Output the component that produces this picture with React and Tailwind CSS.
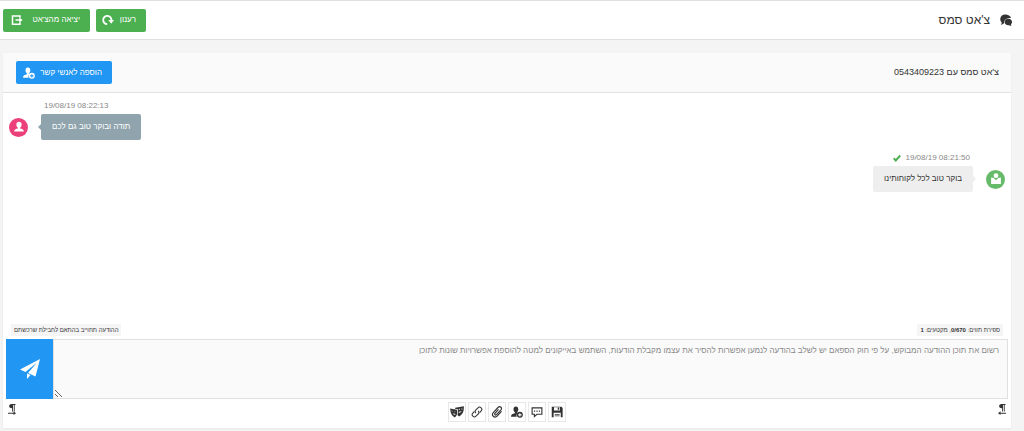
import React from 'react';

const ChatsIcon = () => (
    <svg viewBox="0 0 24 24" className="size-3 fill-[#333]" aria-hidden="true">
        <path d="M10.500 1C4.500 1 .5 5 .5 10c0 3 1 5 3 7 0 2-1 3-2 4 3 0 5.500-1 6.500-3 0-7 5-10 14-10C21 4 16 1 10.500 1z" />
        <path d="M17 9.500c-4.500 0-8 3-8 6.500s3.500 6.500 8 6.500c1 0 3 1 6 1-1-1-1-2-1-3 1-1 2-2.500 2-4.500 0-3.500-3-6.500-7-6.500z" />
    </svg>
);

const ExitIcon = () => (
    <svg viewBox="0 0 16 16" className="size-3 fill-white" aria-hidden="true">
        <path d="M1 1.500h12v3.500h-2V3.500H3v9h8V11h2v3.500H1z" />
        <path d="M6 7h5V4.500L15.500 8 11 11.500V9H6z" />
    </svg>
);

const ReloadIcon = () => (
    <svg viewBox="0 0 16 16" className="size-3 fill-none stroke-white" aria-hidden="true">
        <path d="M7 13.500A5.500 5.500 0 1 1 12.500 9" strokeWidth="2.400" />
        <path d="M8.500 8H16l-3.700 5z" fill="#fff" stroke="none" />
    </svg>
);

const UserPlusIcon = () => (
    <svg viewBox="0 0 16 16" className="size-3" fill="currentColor" aria-hidden="true">
        <path d="M6.500.5C4.300.5 3.300 2 3.300 4.300c0 2 .9 3.500 1.900 4v1.300C2.200 10.100 0 11.500 0 14.200h7.500c-.6-2.300.3-4.700 2-5.700-.8 0-1.700 1.300-1.700 0 1-.5 1.900-2 1.900-4.200C9.700 2 8.700.5 6.500.5z" />
        <path fillRule="evenodd" d="M11.800 7.800a4 4 0 1 0 0 8 4 4 0 0 0 0-8zm-.7 1.700h1.400v1.600h1.600v1.400h-1.600v1.600h-1.400v-1.600H9.500v-1.400h1.600z" />
    </svg>
);

const PersonIcon = () => (
    <svg viewBox="0 0 16 16" className="size-3 fill-white" aria-hidden="true">
        <path d="M8 1C5.500 1 4.500 2.700 4.500 5c0 1.800.9 3.400 2.100 4.100v1C3.500 10.500 1.500 11.700 1.500 14h13c0-2.300-2-3.500-5.100-3.900v-1c1.200-.7 2.100-2.300 2.100-4.100C11.500 2.700 10.500 1 8 1z" />
    </svg>
);

const AgentIcon = () => (
    <svg viewBox="0 0 16 16" className="size-3 fill-white" aria-hidden="true">
        <circle cx="8" cy="3.600" r="3.200" />
        <path d="M1.500 6l3.500.7L8 9.500l3-2.800 3.500-.7v8.500h-13z" />
    </svg>
);

const CheckIcon = () => (
    <svg viewBox="0 0 16 16" className="size-2 fill-none stroke-[#4caf50]" aria-hidden="true">
        <path d="M1.500 8.500l4 4.500L14.500 3" strokeWidth="3.800" />
    </svg>
);

const PlaneIcon = () => (
    <svg viewBox="0 0 22 22" className="size-[22px] fill-white" aria-hidden="true">
        <path d="M21 1L1 11.500l5.500 2.500L18 4.500 9 15l7.500 3.500z" />
        <path d="M8 15.500V21l3.500-4z" />
    </svg>
);

const MasksIcon = () => (
    <svg viewBox="0 0 16 16" className="size-3.5" fill="currentColor" aria-hidden="true">
        <path fillRule="evenodd" d="M6 3l9.800-1.500c.2 5-.8 9.500-5.300 11.500-1-.4-1.500-1-2-1.900.8-2 .7-4.300.2-6.600L6 4.500zm4 1.500v1l1.400-.2v-1zm3-.4v.9l1.200-.2V4zm-3 4.700c1.600 0 2.600-.6 3.300-2L9.800 8z" />
        <path fillRule="evenodd" d="M.2 4l7.600 1.300c1 3 .7 6.500-2.300 9C2 12.500.2 9 .2 4zm1.500 2.300l.3 1.100 1.300-.3zM5 7.300l.3 1 1.200-.5zM3 9.700c1 1.300 2 1.600 3.200 1.300L6 10z" />
    </svg>
);

const LinkIcon = () => (
    <svg viewBox="0 0 16 16" className="size-3 fill-none stroke-current" strokeWidth="1.400" aria-hidden="true">
        <path d="M6.500 9.500C5 8 5.300 6.400 6.500 5.200L9.300 2.400c2.700-2.700 7 1.200 4.300 4.200L11.500 8.700" />
        <path d="M9.500 6.500c1.500 1.500 1.200 3.100 0 4.300l-2.800 2.800c-2.700 2.700-7-1.200-4.300-4.200l2.100-2.100" />
    </svg>
);

const ClipIcon = () => (
    <svg viewBox="0 0 16 16" className="size-3 fill-none stroke-current" strokeWidth="1.500" aria-hidden="true">
        <path d="M10 4.500L5.300 9.700c-1.200 1.500.6 3.200 2 1.900l6-6.400c2.200-2.700-1.300-5.700-3.700-3.500L3 8.700c-3 3.500 1.500 8.200 5.200 4.800L14 7.300" />
    </svg>
);

const BubbleIcon = () => (
    <svg viewBox="0 0 16 16" className="size-3 fill-none stroke-current" strokeWidth="1.500" aria-hidden="true">
        <path d="M1.500 2.500h13v8.500H8L4.500 14v-3h-3z" />
        <path d="M4 6.800h1.600M7.200 6.800h1.600M10.400 6.800H12" />
    </svg>
);

const FloppyIcon = () => (
    <svg viewBox="0 0 16 16" className="size-3" fill="currentColor" aria-hidden="true">
        <path fillRule="evenodd" d="M1 1h13l1.500 1.500V15H1zm3 .8V6h8V1.800zM3.500 9v6h9.500V9z" />
        <path d="M9 2h2v3H9zM5 10.500h6.500v1H5zM5 12.700h6.500v1H5z" />
    </svg>
);

const PilcrowIcon = ({ flip }) => (
    <svg viewBox="0 0 8 11" className="h-[11px] w-2" fill="#333" aria-hidden="true">
        <path d="M3.500 0H7.500v1H6.700v6.500h-.9V1H5v6.500h-.9V4.300C.3 4.300.3 0 3.500 0z" />
        {flip ? <path d="M8 8.700H2.500V7.300L0 9.200l2.500 1.800V9.700H8z" /> : <path d="M0 8.700h5.500V7.300L8 9.200l-2.500 1.800V9.700H0z" />}
    </svg>
);

const tools = [
    { label: 'שמירה', icon: <FloppyIcon /> },
    { label: 'תבניות', icon: <BubbleIcon /> },
    { label: 'איש קשר', icon: <UserPlusIcon /> },
    { label: 'צירוף קובץ', icon: <ClipIcon /> },
    { label: 'קישור', icon: <LinkIcon /> },
    { label: 'סמלים', icon: <MasksIcon /> },
];

const App = () => {
    return (
        <div dir="rtl" className="min-h-screen bg-[#f4f4f4] font-['Liberation_Sans',sans-serif] text-[#333]">
            {/* Top bar */}
            <header className="flex h-10 items-center justify-between border-y border-[#e0e0e0] bg-white pr-3 pl-[3px]">
                <h1 className="flex items-center gap-2.5 text-[12px]">
                    <ChatsIcon /> צ'אט סמס
                </h1>
                <div className="flex gap-1.5 text-[8px] text-white">
                    <button type="button" className="flex h-[23px] w-[50px] items-center justify-between rounded-xs bg-[#4caf50] pr-2.5 pl-1.5">
                        רענון <ReloadIcon />
                    </button>
                    <button type="button" className="flex h-[23px] w-[87px] items-center justify-between rounded-xs bg-[#4caf50] pr-2.5 pl-2">
                        יציאה מהצ'אט <ExitIcon />
                    </button>
                </div>
            </header>

            {/* Chat panel */}
            <main className="mt-[13px] mr-[13px] ml-[3px] bg-white shadow-xs">
                <div className="flex h-10 items-center justify-between border-b border-[#e2e2e2] bg-[#fafafa] pr-3 pl-[13px]">
                    <h2 className="text-[9px]">צ'אט סמס עם 0543409223</h2>
                    <button type="button" className="flex h-[23px] w-24 items-center justify-between rounded-xs bg-[#2196f3] pr-2.5 pl-[7px] text-[8px] text-white">
                        הוספה לאנשי קשר <UserPlusIcon />
                    </button>
                </div>

                {/* Messages */}
                <div className="flex h-[231px] flex-col gap-3 px-1.5 pt-[7px] text-[8px]">
                    <div className="flex flex-col items-end">
                        <time dir="ltr" className="ml-[35px] leading-3 text-[#888]">19/08/19 08:22:13</time>
                        <div className="mt-0.5 flex items-center">
                            <p className="flex h-[26px] items-center rounded-xs bg-[#90a4ae] px-[11px] text-white">תודה ובוקר טוב גם לכם</p>
                            <span className="ml-2.5 border-y-3 border-r-3 border-transparent border-r-[#90a4ae]" />
                            <span className="flex size-[19px] items-center justify-center rounded-full bg-[#ec407a]"><PersonIcon /></span>
                        </div>
                    </div>
                    <div className="flex flex-col items-start">
                        <div className="mr-[35px] flex items-center gap-1">
                            <time dir="ltr" className="leading-3 text-[#888]">19/08/19 08:21:50</time>
                            <CheckIcon />
                        </div>
                        <div className="mt-0.5 flex items-center">
                            <span className="flex size-[19px] items-center justify-center rounded-full bg-[#66bb6a]"><AgentIcon /></span>
                            <span className="mr-2.5 border-y-3 border-l-3 border-transparent border-l-[#eee]" />
                            <p className="flex h-[26px] items-center rounded-xs bg-[#eee] px-[11px]">בוקר טוב לכל לקוחותינו</p>
                        </div>
                    </div>
                </div>

                {/* Composer */}
                <div className="flex justify-between px-2 pb-[3px] text-[6px] leading-3">
                    <span className="bg-[#f5f5f5] px-[3px]">ספירת תווים: <b>0/670</b>, מקטעים: <b>1</b></span>
                    <span className="bg-[#f5f5f5] px-[3px]">ההודעה תחוייב בהתאם לחבילת שרכשתם</span>
                </div>
                <div className="flex h-[60px] pr-[3px] pl-[3px]">
                    <textarea
                        aria-label="תוכן ההודעה"
                        placeholder="רשום את תוכן ההודעה המבוקש, על פי חוק הספאם יש לשלב בהודעה לנמען אפשרות להסיר את עצמו מקבלת הודעות, השתמש באייקונים למטה להוספת אפשרויות שונות לתוכן"
                        className="min-w-0 grow resize-y border border-[#e0e0e0] bg-[#fafafa] px-2 py-[5px] text-[8px] leading-3 placeholder:text-[#888]"
                    />
                    <button type="button" aria-label="שליחה" className="flex w-[47px] items-center justify-center bg-[#2196f3]">
                        <PlaneIcon />
                    </button>
                </div>
                <div className="flex items-start justify-between px-[5px] pt-[3px] pb-1.5">
                    <button type="button" aria-label="ימין לשמאל" className="pt-0.5"><PilcrowIcon flip /></button>
                    <div className="flex gap-0.5">
                        {tools.map((tool) => (
                            <button key={tool.label} type="button" aria-label={tool.label} className="flex h-5 w-[18px] items-center justify-center border border-[#e8e8e8]">
                                {tool.icon}
                            </button>
                        ))}
                    </div>
                    <button type="button" aria-label="שמאל לימין" className="pt-0.5"><PilcrowIcon /></button>
                </div>
            </main>
        </div>
    );
};

export default App;
